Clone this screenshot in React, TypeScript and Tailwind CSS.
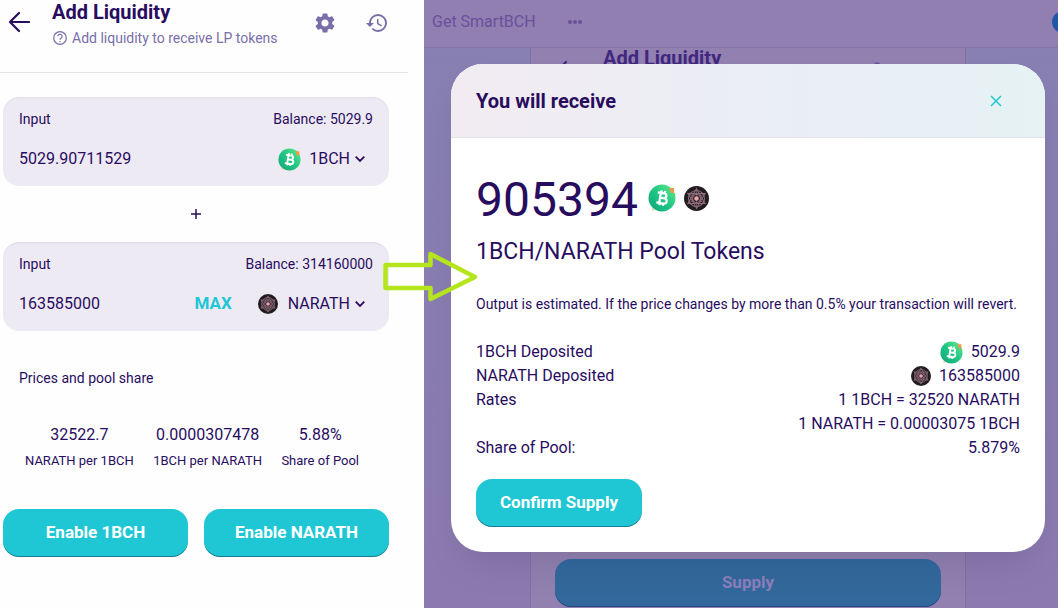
import { useState } from "react";
import { MdHistory, MdSettings } from "react-icons/md";

const fontStack = "font-['Roboto','Liberation_Sans',sans-serif]";

function BchIcon({ className }: { className: string }) {
  return (
    <svg viewBox="0 0 28 28" className={className} aria-hidden="true">
      <defs>
        <linearGradient id="bch" x1="1" y1="0" x2="0" y2="1">
          <stop offset="0" stopColor="#62ee8b" />
          <stop offset="0.5" stopColor="#20c584" />
          <stop offset="1" stopColor="#0fa579" />
        </linearGradient>
      </defs>
      <circle cx="14" cy="14" r="13.5" fill="url(#bch)" />
      <path d="M21 4h5v5h-3z" fill="#ef9a45" />
      <path d="M4 23.500l2.500 2.500-2 .5z" fill="#f3bf62" />
      <g transform="rotate(9 14 14)" fill="none" stroke="#fff" strokeWidth="2.3" strokeLinejoin="round">
        <path d="M9 9h6.5a2.5 2.5 0 0 1 0 5H12m0 0h4.500a2.600 2.600 0 0 1 0 5.200H9M12 9v10M12.500 6.500V9M16 6.500V9M12.500 19v2.500M16 19v2.500" />
      </g>
    </svg>
  );
}

function NarathIcon({ className }: { className: string }) {
  return (
    <svg viewBox="0 0 28 28" className={className} aria-hidden="true">
      <circle cx="14" cy="14" r="14" fill="#211c20" />
      <g fill="none" stroke="#8d6c79" strokeWidth="1.2">
        <circle cx="14" cy="14" r="9" />
        <circle cx="14" cy="14" r="4.500" />
        <path d="M14 3l9.500 16.500h-19zM14 25L4.500 8.500h19z" />
        <path d="M14 2v24M3.600 8l20.800 12M24.400 8L3.600 20" strokeWidth="0.7" />
      </g>
      <circle cx="14" cy="14" r="2.500" fill="#ef9fae" />
    </svg>
  );
}

function BackArrow() {
  return (
    <svg viewBox="0 0 22 22" className="size-[22px]" fill="none" stroke="currentColor" strokeWidth="2.2" strokeLinecap="round" strokeLinejoin="round" aria-hidden="true">
      <path d="M21 11H2M11 2L2 11l9 9" />
    </svg>
  );
}

function Chevron() {
  return (
    <svg viewBox="0 0 10 8" className="h-2 w-[10px]" fill="none" stroke="currentColor" strokeWidth="1.8" aria-hidden="true">
      <path d="M0.700 1.700L5 6l4.300-4.300" />
    </svg>
  );
}

type CurrencyInputProps = {
  id: string;
  balance: string;
  initial: string;
  token: string;
  max?: boolean;
};

function CurrencyInput({ id, balance, initial, token, max }: CurrencyInputProps) {
  const [value, setValue] = useState(initial);
  return (
    <div className="h-[89px] rounded-2xl bg-[#eeeaf4] px-4 pt-3 shadow-[inset_0_2px_2px_-1px_rgba(74,74,104,0.1)]">
      <div className="flex justify-between text-sm leading-5">
        <label htmlFor={id}>Input</label>
        <span>Balance: {balance}</span>
      </div>
      <div className="mt-[14px] flex h-8 items-center">
        <input
          id={id}
          value={value}
          onChange={(e) => setValue(e.target.value)}
          className="min-w-0 flex-1 bg-transparent text-base outline-none"
        />
        {max && <button className="mr-[26px] text-[17px] font-bold text-[#1fc7d4]">MAX</button>}
        <button className="mr-2 flex items-center text-base">
          {token === "1BCH" ? <BchIcon className="mr-2 size-[23px]" /> : <NarathIcon className="mr-2.5 size-5" />}
          <span className="mr-[5px]">{token}</span>
          <Chevron />
        </button>
      </div>
    </div>
  );
}

const primaryButton =
  "h-12 rounded-2xl bg-[#1fc7d4] text-[17px] font-bold text-white shadow-[inset_0_-1px_0_rgba(14,14,44,0.4)]";

const prices = [
  ["32522.7", "NARATH per 1BCH"],
  ["0.0000307478", "1BCH per NARATH"],
  ["5.88%", "Share of Pool"],
];

function LiquidityForm() {
  return (
    <section className="min-w-0 bg-[#fefeff]">
      <header className="mr-4 flex h-[73px] items-start border-b border-[#e2e2e5] pl-2">
        <button aria-label="Back" className="mt-[11px]">
          <BackArrow />
        </button>
        <div className="ml-[22px] flex-1">
          <h1 className="text-xl leading-6 font-bold">Add Liquidity</h1>
          <p className="mt-1 flex items-center gap-1 text-sm leading-5 text-[#7a6eaa]">
            <svg viewBox="0 0 24 24" className="size-4" fill="none" stroke="currentColor" strokeWidth="1.8" aria-hidden="true">
              <circle cx="12" cy="12" r="9.500" />
              <path d="M8.800 9.500a3.200 3.200 0 1 1 4.800 2.800c-1.200.8-1.600 1.200-1.600 2.400M12 16.500v2" />
            </svg>
            Add liquidity to receive LP tokens
          </p>
        </div>
        <div className="mt-[11px] mr-[19px] flex gap-[28px] text-[#7a6eaa]">
          <button aria-label="Settings"><MdSettings size={24} /></button>
          <button aria-label="History"><MdHistory size={24} /></button>
        </div>
      </header>

      <div className="mt-6 mr-[35px] ml-[3px]">
        <CurrencyInput id="amount-a" balance="5029.9" initial="5029.90711529" token="1BCH" />
        <div className="flex h-14 items-center justify-center">
          <svg viewBox="0 0 10 10" className="size-[10px]" stroke="currentColor" strokeWidth="1.500" aria-hidden="true">
            <path d="M5 0v10M0 5h10" />
          </svg>
        </div>
        <CurrencyInput id="amount-b" balance="314160000" initial="163585000" token="NARATH" max />

        <h2 className="mt-[37px] pl-4 text-sm leading-5">Prices and pool share</h2>
        <dl className="mt-[35px] flex justify-between pr-[30px] pl-[22px] text-center">
          {prices.map(([value, label]) => (
            <div key={label} className="flex flex-col-reverse">
              <dt className="mt-0.5 text-[13px] leading-6">{label}</dt>
              <dd className="text-base leading-6">{value}</dd>
            </div>
          ))}
        </dl>
        <div className="mt-9 grid grid-cols-2 gap-4">
          <button className={primaryButton}>Enable 1BCH</button>
          <button className={primaryButton}>Enable NARATH</button>
        </div>
      </div>
    </section>
  );
}

// dimmed page that sits under the modal
function DimmedPage() {
  return (
    <div className="flex h-full flex-col bg-linear-to-b from-[#8780b2] to-[#8b7ab0]">
      <nav className="flex h-12 shrink-0 items-center border-b border-[#8577aa] bg-[#927fb2] pb-1 pl-2 text-base text-[#69509a]">
        <a href="#smartbch">Get SmartBCH</a>
        <button aria-label="More" className="ml-8 flex gap-px">
          <i className="size-1 rounded-full bg-current" />
          <i className="size-1 rounded-full bg-current" />
          <i className="size-1 rounded-full bg-current" />
        </button>
        <span className="-mr-4 ml-auto size-[22px] rounded-full bg-[#2257a5]" />
      </nav>
      <div className="mr-[92px] ml-[106px] flex flex-1 flex-col justify-between border-x border-[#8170a7] bg-[#9180b0] px-6">
        <div className="flex items-start text-[#41277f]">
          <span className="mt-3"><BackArrow /></span>
          <h2 className="ml-[26px] flex-1 text-xl leading-5 font-bold">Add Liquidity</h2>
          <MdSettings size={24} className="mt-3 mr-[52px] text-[#6a529c]" />
        </div>
        <button className="mb-px h-12 w-full rounded-2xl bg-[#33689c] text-[17px] font-bold text-[#8c7fbc] shadow-[inset_0_-1px_0_#294a86]">
          Supply
        </button>
      </div>
    </div>
  );
}

function ReceiveModal() {
  return (
    <div role="dialog" aria-labelledby="receive-title" className="h-[488px] w-full overflow-hidden rounded-[32px] bg-white shadow-[0_20px_36px_-8px_rgba(14,14,44,0.1)]">
      <header className="flex h-[74px] items-center justify-between border-b border-[#e3e3e8] bg-linear-to-r from-[#f2ecf2] via-[#ebeef5] to-[#e6f2f4] pr-[42px] pl-[25px]">
        <h2 id="receive-title" className="text-xl font-bold">You will receive</h2>
        <button aria-label="Close" className="text-[#1fc7d4]">
          <svg viewBox="0 0 14 14" className="size-[14px]" fill="none" stroke="currentColor" strokeWidth="1.500">
            <path d="M2 2l10 10M12 2L2 12" />
          </svg>
        </button>
      </header>
      <div className="px-[25px] pt-9">
        <div className="flex items-center text-5xl leading-[52px]">
          905394
          <BchIcon className="mb-1 ml-[10px] size-7" />
          <NarathIcon className="mb-1 ml-2 size-[25px]" />
        </div>
        <p className="mt-3 text-[23px] leading-7">1BCH/NARATH Pool Tokens</p>
        <p className="mt-7 text-sm leading-5 whitespace-nowrap">
          Output is estimated. If the price changes by more than 0.5% your transaction will revert.
        </p>
        <dl className="mt-[26px] grid grid-cols-[auto_1fr] text-base leading-6">
          <dt>1BCH Deposited</dt>
          <dd className="flex items-center justify-end gap-2"><BchIcon className="size-[23px]" />5029.9</dd>
          <dt>NARATH Deposited</dt>
          <dd className="flex items-center justify-end gap-2"><NarathIcon className="size-5" />163585000</dd>
          <dt>Rates</dt>
          <dd className="text-right">
            <p>1 1BCH = 32520 NARATH</p>
            <p>1 NARATH = 0.00003075 1BCH</p>
          </dd>
          <dt>Share of Pool:</dt>
          <dd className="text-right">5.879%</dd>
        </dl>
        <button className={`mt-[19px] px-6 ${primaryButton}`}>Confirm Supply</button>
      </div>
    </div>
  );
}

export default function App() {
  return (
    <main className={`relative grid min-h-screen grid-cols-[424fr_634fr] overflow-hidden text-[#280d5f] ${fontStack}`}>
      <LiquidityForm />
      <section className="relative min-w-0">
        <DimmedPage />
        <div className="absolute inset-0 flex items-start pt-16 pr-[13px] pl-[27px]">
          <ReceiveModal />
        </div>
        <svg viewBox="0 0 96 52" className="absolute top-[250px] -left-[42px] h-[52px] w-24" fill="none" stroke="#b5e61d" strokeWidth="4.500" strokeLinejoin="round" aria-hidden="true">
          <path d="M3.500 15h45V4L93 27 48.500 49V38h-45z" />
        </svg>
      </section>
    </main>
  );
}
